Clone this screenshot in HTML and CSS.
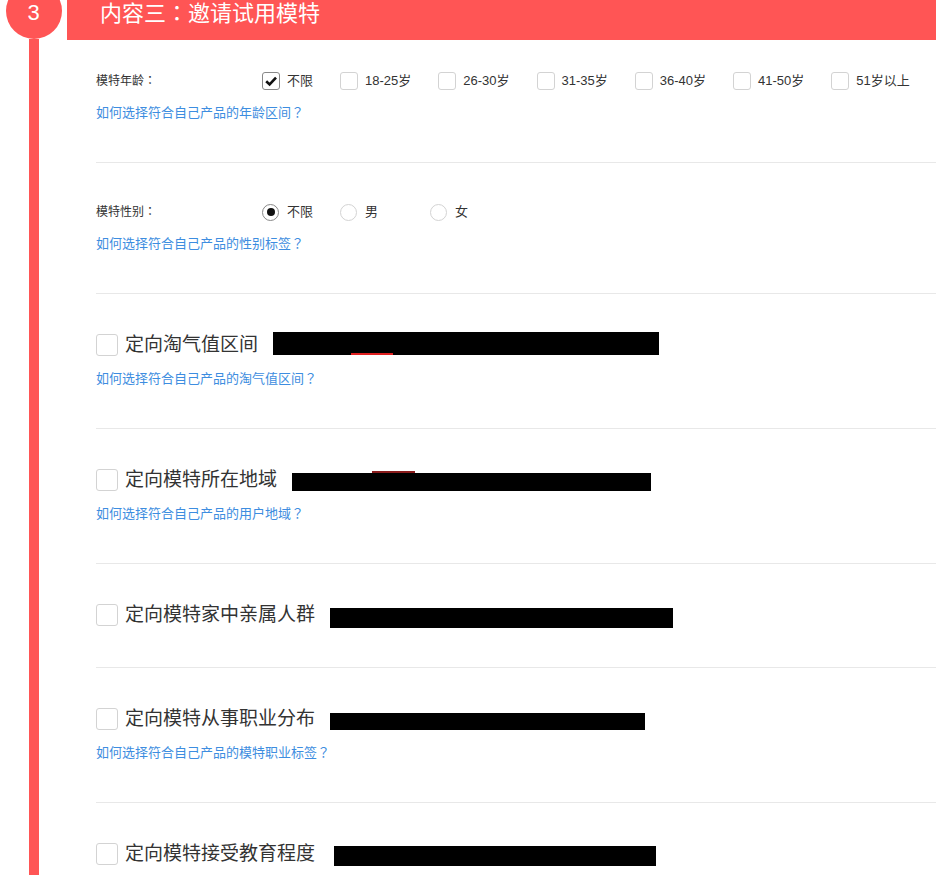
FILE: index.html
```html
<!DOCTYPE html>
<html>

<head>
  <meta charset="UTF-8" />
  <title>邀请试用模特</title>
  <link rel="stylesheet" href="styles.css">
</head>

<body>
  <div class="step">
    <!-- Step number and timeline -->
    <div class="step-rail">
      <div class="step-num">3</div>
      <div class="step-line"></div>
    </div>

    <div class="step-main">
      <div class="step-title">内容三<span class="punct">：</span>邀请试用模特</div>

      <div class="form">
        <!-- Age -->
        <div class="section">
          <div class="field">
            <div class="field-label">模特年龄<span class="punct">：</span></div>
            <div class="options">
              <label class="opt">
                <span class="box checked">
                  <svg width="16" height="16" viewBox="0 0 16 16">
                    <polyline points="3.2,8.2 6.6,11.4 13,4.6" fill="none" stroke="#111" stroke-width="2.6" />
                  </svg>
                </span>
                不限
              </label>
              <label class="opt"><span class="box"></span>18-25岁</label>
              <label class="opt"><span class="box"></span>26-30岁</label>
              <label class="opt"><span class="box"></span>31-35岁</label>
              <label class="opt"><span class="box"></span>36-40岁</label>
              <label class="opt"><span class="box"></span>41-50岁</label>
              <label class="opt"><span class="box"></span>51岁以上</label>
            </div>
          </div>
          <a class="help" href="#">如何选择符合自己产品的年龄区间<span class="punct">？</span></a>
        </div>

        <!-- Gender -->
        <div class="section">
          <div class="field">
            <div class="field-label">模特性别<span class="punct">：</span></div>
            <div class="options">
              <label class="opt radio"><span class="dot checked"></span>不限</label>
              <label class="opt radio wide"><span class="dot"></span>男</label>
              <label class="opt radio"><span class="dot"></span>女</label>
            </div>
          </div>
          <a class="help" href="#">如何选择符合自己产品的性别标签<span class="punct">？</span></a>
        </div>

        <div class="section">
          <div class="target">
            <span class="box big"></span>
            <span class="target-name">定向淘气值区间</span>
            <span class="redact" style="width: 386px; height: 23px; margin-top: -3px;">
              <span class="mark mark-under"></span>
            </span>
          </div>
          <a class="help" href="#">如何选择符合自己产品的淘气值区间<span class="punct">？</span></a>
        </div>

        <div class="section">
          <div class="target">
            <span class="box big"></span>
            <span class="target-name">定向模特所在地域</span>
            <span class="redact" style="width: 359px; height: 18px; margin-top: 4px;">
              <span class="mark mark-over"></span>
            </span>
          </div>
          <a class="help" href="#">如何选择符合自己产品的用户地域<span class="punct">？</span></a>
        </div>

        <div class="section">
          <div class="target">
            <span class="box big"></span>
            <span class="target-name">定向模特家中亲属人群</span>
            <span class="redact" style="width: 343px; height: 20px; margin-top: 6px;"></span>
          </div>
        </div>

        <div class="section">
          <div class="target">
            <span class="box big"></span>
            <span class="target-name">定向模特从事职业分布</span>
            <span class="redact" style="width: 315px; height: 17px; margin-top: 5px;"></span>
          </div>
          <a class="help" href="#">如何选择符合自己产品的模特职业标签<span class="punct">？</span></a>
        </div>

        <div class="section">
          <div class="target">
            <span class="box big"></span>
            <span class="target-name">定向模特接受教育程度</span>
            <span class="redact" style="width: 322px; height: 20px; margin-top: 4px; margin-left: 19px;"></span>
          </div>
        </div>
      </div>
    </div>
  </div>
</body>

</html>
```

FILE: styles.css
```css
body {
  margin: 0;
  font-family: "Liberation Sans", "Noto Sans CJK SC", sans-serif;
  color: #333;
  background-color: #fff;
  overflow: hidden;
}

/* full-width punctuation, centred in its box */
.punct {
  font-family: "Noto Sans CJK TC", "Noto Sans CJK SC", sans-serif;
  line-height: 1;
}

.step {
  display: flex;
}

/* Timeline on the left */
.step-rail {
  width: 67px;
  flex-shrink: 0;
  display: flex;
  flex-direction: column;
  align-items: center;
}

.step-num {
  width: 56px;
  height: 56px;
  margin-top: -17px;
  box-sizing: border-box;
  padding-top: 4px;
  border-radius: 50%;
  background-color: #ff5555;
  color: #fff;
  font-size: 22px;
  display: flex;
  justify-content: center;
  align-items: center;
}

.step-line {
  flex: 1;
  width: 10px;
  background-color: #ff5555;
}

.step-main {
  flex: 1;
  min-width: 0;
}

.step-title {
  height: 40px;
  padding-left: 33px;
  background-color: #ff5555;
  color: #fff;
  font-size: 22px;
  line-height: 26px;
}

.form {
  padding-left: 29px;
}

.section {
  padding: 39px 0 40px;
  border-top: 1px solid #e8e8e8;
}

.section:first-child {
  padding-top: 31px;
  border-top: none;
}

.section:last-child {
  padding-bottom: 9px;
}

/* Small option rows */
.field {
  display: flex;
  align-items: center;
  height: 20px;
}

.field-label {
  width: 166px;
  flex-shrink: 0;
  font-size: 12px;
  line-height: 20px;
  color: #333;
}

.options {
  display: flex;
  align-items: center;
  flex-shrink: 0;
}

.opt {
  display: flex;
  align-items: center;
  gap: 7px;
  margin-right: 27px;
  font-size: 13px;
  line-height: 20px;
  color: #333;
  white-space: nowrap;
  cursor: pointer;
}

.box {
  width: 18px;
  height: 18px;
  box-sizing: border-box;
  border: 1px solid #d3d3d3;
  border-radius: 3px;
  background-color: #fff;
  display: flex;
  justify-content: center;
  align-items: center;
  flex-shrink: 0;
}

.box.checked {
  border-color: #888;
}

.box.big {
  width: 22px;
  height: 22px;
}

.opt.radio {
  gap: 8px;
}

.opt.radio.wide {
  margin-right: 52px;
}

.dot {
  width: 17px;
  height: 17px;
  box-sizing: border-box;
  border: 1px solid #d3d3d3;
  border-radius: 50%;
  display: flex;
  justify-content: center;
  align-items: center;
}

.dot.checked {
  border-color: #888;
}

.dot.checked::after {
  content: "";
  width: 8px;
  height: 8px;
  border-radius: 50%;
  background-color: #111;
}

.help {
  display: block;
  height: 18px;
  margin-top: 13px;
  font-size: 13px;
  line-height: 18px;
  color: #3d8de0;
  text-decoration: none;
}

/* Targeting rows */
.target {
  display: flex;
  align-items: center;
  height: 24px;
}

.target .box {
  margin-right: 7px;
}

.target-name {
  font-size: 19px;
  line-height: 24px;
  color: #333;
  white-space: nowrap;
}

.redact {
  position: relative;
  flex-shrink: 0;
  margin-left: 15px;
  background-color: #000;
}

.mark {
  position: absolute;
  height: 2px;
}

.mark-under {
  left: 78px;
  bottom: 0;
  width: 42px;
  background-color: #e02020;
}

.mark-over {
  left: 80px;
  top: -2px;
  width: 43px;
  background-color: #8a1c1c;
}
```
